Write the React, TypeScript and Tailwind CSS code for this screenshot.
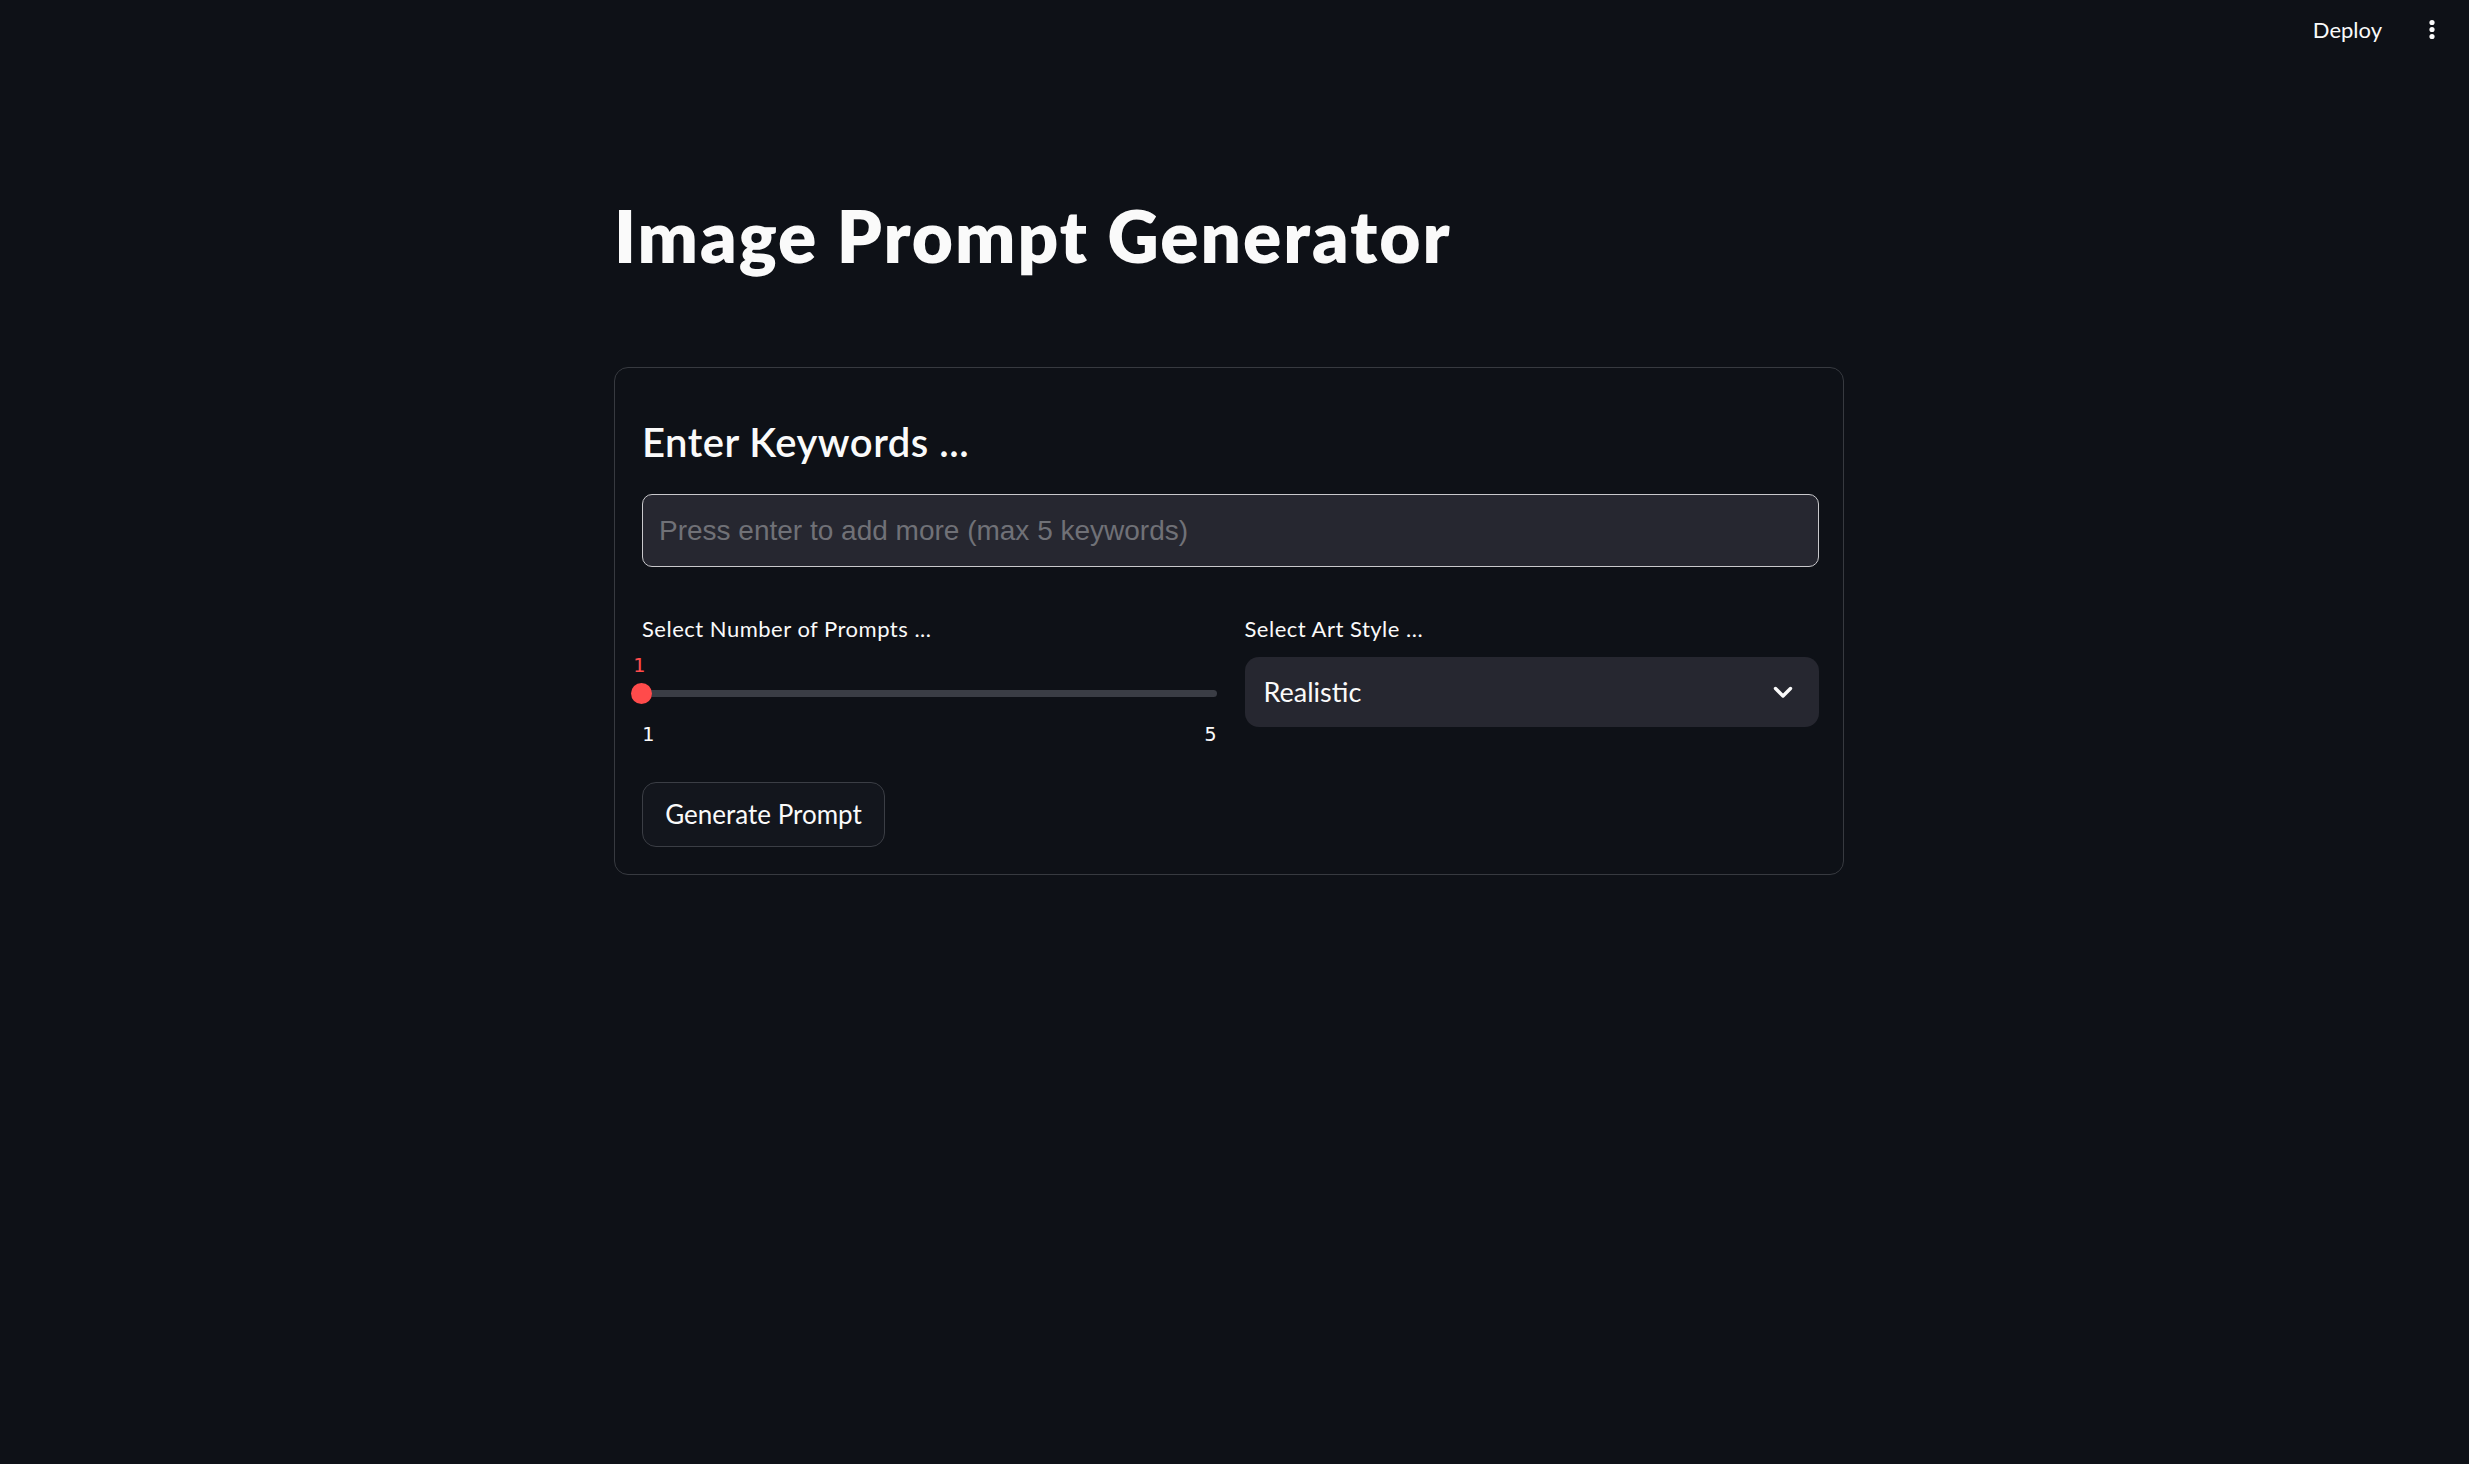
import React from "react";

const Kebab = () => (
  <svg width="18" height="24" viewBox="0 0 18 24" fill="#fafafa">
    <circle cx="9" cy="4.5" r="2.6" />
    <circle cx="9" cy="11.5" r="2.6" />
    <circle cx="9" cy="18.5" r="2.6" />
  </svg>
);

const Chevron = () => (
  <svg width="20" height="13" viewBox="0 0 20 13" fill="none">
    <path d="M2.5 2.5 L10 10 L17.5 2.5" stroke="#fafafa" strokeWidth="3.4" strokeLinecap="round" strokeLinejoin="round" />
  </svg>
);

const Slider = () => {
  return (
    <div className="flex flex-col">
      {/* current value above the thumb */}
      <div className="mt-[11px] h-[24px] leading-[24px] text-[20px] text-[#ff4b4b] font-['DejaVu_Sans_Mono',monospace] -ml-[9px]">
        1
      </div>
      <div className="relative mt-[5px] h-[22px] flex items-center">
        <div className="h-[7px] w-full rounded-full bg-[#3a3d45]" />
        <div className="absolute left-[-11px] top-[0.5px] h-[21px] w-[21px] rounded-full bg-[#ff4b4b]" />
      </div>
      <div className="mt-[18px] flex justify-between h-[24px] leading-[24px] text-[20px] text-[#fafafa] font-['DejaVu_Sans_Mono',monospace]">
        <span>1</span>
        <span>5</span>
      </div>
    </div>
  );
};

export default function App() {
  return (
    <div className="min-h-screen w-full bg-[#0e1117] text-[#fafafa] font-[Lato,'Noto_Sans',sans-serif]">
      <header className="flex h-[60px] items-center justify-end gap-[41px] pr-[28px]">
        <span className="text-[22px] leading-none">Deploy</span>
        <Kebab />
      </header>

      <div className="pr-[11px]">
        <main className="mx-auto w-[1230px]">
          <h1 className="mt-[134px] text-[71px] font-extrabold leading-[84px] tracking-[2px]">
            Image Prompt Generator
          </h1>

          <section className="mt-[89px] rounded-[14px] border border-[#373a40] pl-[27px] pr-[24px] pt-[26px] pb-[27px]">
            <h3 className="pt-[24px] text-[40px] font-semibold leading-[48px] tracking-[0.5px]">Enter Keywords ...</h3>

            <div className="mt-[28px] flex h-[73px] items-center rounded-[10px] border border-[#c9c9cc] bg-[#262730] pl-[16px]">
              <input
                className="w-full bg-transparent text-[28px] text-[#fafafa] outline-none placeholder:text-[#707177] font-['Liberation_Sans',Arial,sans-serif]"
                placeholder="Press enter to add more (max 5 keywords)"
              />
            </div>

            <div className="mt-[49px] grid grid-cols-2 gap-[28px]">
              <div className="flex flex-col">
                <label className="h-[26px] text-[22px] leading-[26px] tracking-[0.5px]">Select Number of Prompts ...</label>
                <Slider />
              </div>
              <div className="flex flex-col">
                <label className="h-[26px] text-[22px] leading-[26px] tracking-[0.5px]">Select Art Style ...</label>
                <div className="mt-[15px] flex h-[70px] items-center justify-between rounded-[14px] bg-[#262730] pl-[19px] pr-[26px]">
                  <span className="text-[27px]">Realistic</span>
                  <Chevron />
                </div>
              </div>
            </div>

            <button className="mt-[36px] flex h-[65px] w-[243px] items-center justify-center rounded-[14px] border border-[#3b3e45] bg-[#13161d] text-[26px] text-[#fafafa]">
              Generate Prompt
            </button>
          </section>
        </main>
      </div>
    </div>
  );
}
